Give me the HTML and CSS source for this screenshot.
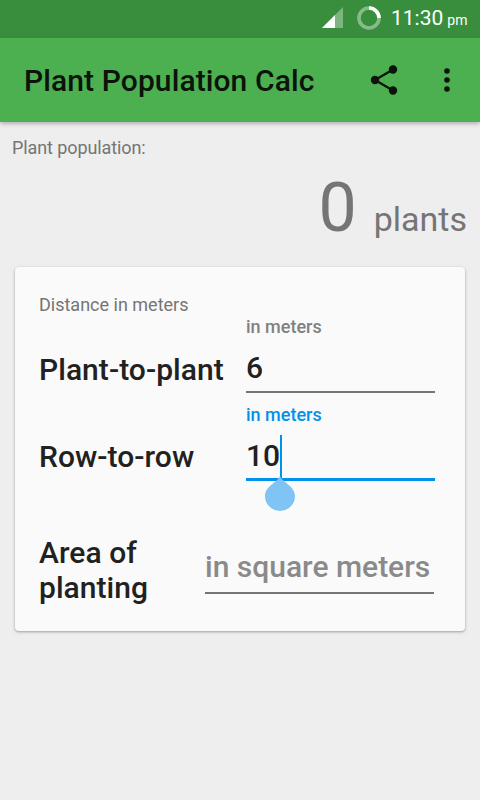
FILE: index.html
```html
<!DOCTYPE html>
<html lang="en">
<head>
    <meta charset="UTF-8">
    <meta name="viewport" content="width=device-width, initial-scale=1.0">
    <title>Plant Population Calc</title>
    <link rel="stylesheet" href="styles.css">
</head>
<body>
    <div class="status-bar">
        <svg class="signal" width="22" height="22" viewBox="0 0 22 22">
            <path d="M0 21 L21 0 V21 Z" fill="#fff" fill-opacity="0.35"/>
            <path d="M0 21 L13 8 V21 Z" fill="#fff"/>
        </svg>
        <svg class="battery" width="26" height="26" viewBox="0 0 26 26">
            <circle cx="13" cy="13" r="10" fill="none" stroke="#fff" stroke-opacity="0.4" stroke-width="3.6"/>
            <path d="M13 3 A10 10 0 0 1 23 13" fill="none" stroke="#fff" stroke-width="3.6"/>
        </svg>
        <div class="clock">11:30<span class="ampm">pm</span></div>
    </div>

    <div class="toolbar">
        <div class="toolbar-title">Plant Population Calc</div>
        <svg class="share-icon" width="32" height="32" viewBox="0 0 32 32">
            <path d="M7 16 L25 5.5 M7 16 L25 26.5" stroke="#0b130b" stroke-width="2.2" fill="none"/>
            <circle cx="7" cy="16" r="4.2" fill="#0b130b"/>
            <circle cx="25" cy="5.5" r="4.2" fill="#0b130b"/>
            <circle cx="25" cy="26.5" r="4.2" fill="#0b130b"/>
        </svg>
        <svg class="more-icon" width="10" height="28" viewBox="0 0 10 28">
            <circle cx="5" cy="5" r="2.8" fill="#0b130b"/>
            <circle cx="5" cy="14" r="2.8" fill="#0b130b"/>
            <circle cx="5" cy="23" r="2.8" fill="#0b130b"/>
        </svg>
    </div>

    <div class="content">
        <div class="result-label">Plant population:</div>
        <div class="result">
            <span class="result-num">0</span>
            <span class="result-unit">plants</span>
        </div>

        <div class="card">
            <div class="card-title">Distance in meters</div>

            <div class="row">
                <div class="row-label">Plant-to-plant</div>
                <div class="field">
                    <div class="hint">in meters</div>
                    <div class="value">6</div>
                </div>
            </div>

            <div class="row row-second">
                <div class="row-label">Row-to-row</div>
                <div class="field field-active">
                    <div class="hint">in meters</div>
                    <div class="value">10</div>
                    <span class="caret"></span>
                    <svg class="handle" width="32" height="36" viewBox="0 0 32 36">
                        <path d="M16 0 C18 6 31 10 31 20 A15 15 0 0 1 1 20 C1 10 14 6 16 0 Z" fill="#7fc4f5"/>
                    </svg>
                </div>
            </div>

            <div class="row row-area">
                <div class="row-label row-label-area">Area of<br>planting</div>
                <div class="field field-area">
                    <div class="value placeholder">in square meters</div>
                </div>
            </div>
        </div>
    </div>
</body>
</html>
```

FILE: styles.css
```css
* {
    box-sizing: border-box;
}
html, body {
    height: 100%;
}
body {
    margin: 0;
    font-family: Roboto, "Noto Sans", sans-serif;
    background-color: #eeeeee;
    color: #212121;
    overflow: hidden;
}
.status-bar {
    height: 38px;
    background-color: #388e3c;
    display: flex;
    align-items: center;
    padding-right: 12px;
    color: #fff;
}
.signal {
    margin-left: 322px;
    margin-top: -2px;
}
.battery {
    margin-left: 12px;
    margin-top: -3px;
}
.clock {
    margin-left: 9px;
    font-size: 21px;
    margin-top: -2px;
    white-space: nowrap;
}
.ampm {
    font-size: 14px;
    margin-left: 4px;
}
.toolbar {
    height: 84px;
    background-color: #4caf50;
    display: flex;
    align-items: center;
    padding-left: 24px;
    box-shadow: 0 2px 4px rgba(0,0,0,0.25);
    position: relative;
}
.toolbar-title {
    flex: 1;
    font-size: 30px;
    font-weight: 500;
    letter-spacing: 0.1px;
    color: #0b130b;
}
.share-icon {
    margin-right: 42px;
}
.more-icon {
    margin-right: 28px;
}
.content {
    padding: 16px 13px 0 12px;
}
.result-label {
    font-size: 18px;
    line-height: 20px;
    letter-spacing: -0.1px;
    color: #757575;
}
.result {
    display: flex;
    justify-content: flex-end;
    align-items: baseline;
    height: 109px;
    color: #757575;
    line-height: 100px;
}
.result-num {
    font-size: 68px;
}
.result-unit {
    font-size: 34px;
    margin-left: 17px;
}
.card {
    margin-left: 3px;
    margin-right: 2px;
    height: 364px;
    background: #fafafa;
    border-radius: 4px;
    box-shadow: 0 1px 3px rgba(0,0,0,0.35);
    padding: 28px 30px 0 24px;
}
.card-title {
    font-size: 18px;
    line-height: 20px;
    color: #757575;
    margin-bottom: 2px;
}
.row {
    display: flex;
    align-items: flex-end;
}
.row-second {
    margin-top: 12px;
}
.row-area {
    margin-top: 54px;
}
.row-label {
    width: 207px;
    font-size: 30px;
    font-weight: 500;
    letter-spacing: 0.05px;
    line-height: 35px;
    color: #212121;
    padding-bottom: 6px;
    white-space: nowrap;
}
.row-second .row-label {
    padding-bottom: 7px;
}
.row-label-area {
    width: 166px;
    padding-bottom: 0;
}
.field {
    width: 189px;
    position: relative;
    border-bottom: 2px solid #757575;
}
.hint {
    font-size: 18px;
    font-weight: 500;
    line-height: 20px;
    color: #808080;
}
.value {
    font-size: 30px;
    font-weight: 500;
    padding-top: 10px;
    line-height: 42px;
    height: 54px;
    color: #212121;
    white-space: nowrap;
}
.field-active {
    border-bottom: 3px solid #0091ea;
}
.field-active .hint {
    color: #0091ea;
}
.field-active .value {
    height: 53px;
}
.field-area {
    width: 229px;
    margin-bottom: 11px;
}
.placeholder {
    color: #8a8a8a;
    padding-top: 0;
    line-height: 46px;
    height: 48px;
}
.caret {
    position: absolute;
    left: 34px;
    top: 30px;
    width: 2px;
    height: 43px;
    background-color: #0091ea;
}
.handle {
    position: absolute;
    left: 18px;
    top: 71px;
}
```
